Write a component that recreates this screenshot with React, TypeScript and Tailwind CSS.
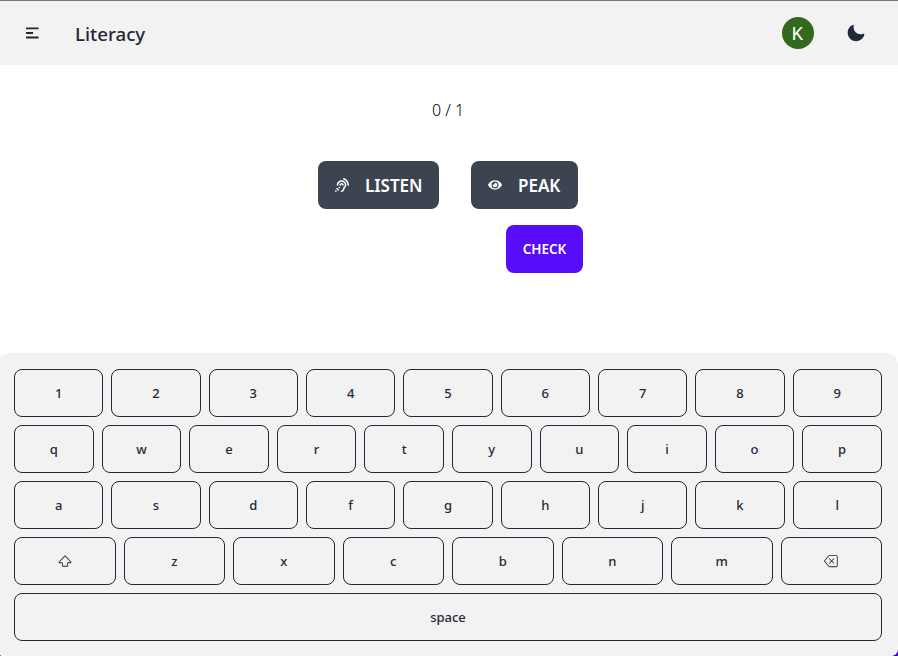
import React from "react";
import { FaAssistiveListeningSystems, FaEye } from "react-icons/fa";
import { BsShift, BsBackspace } from "react-icons/bs";

const rows: string[][] = [
  ["1", "2", "3", "4", "5", "6", "7", "8", "9"],
  ["q", "w", "e", "r", "t", "y", "u", "i", "o", "p"],
  ["a", "s", "d", "f", "g", "h", "j", "k", "l"],
  ["shift", "z", "x", "c", "b", "n", "m", "backspace"],
  ["space"],
];

function Key({ label }: { label: string }) {
  return (
    <button
      aria-label={label}
      className="flex h-12 min-w-0 flex-1 items-center justify-center rounded-lg border border-[#1f2937] text-[13px] font-medium leading-none"
    >
      {label === "shift" ? (
        <BsShift size={14} />
      ) : label === "backspace" ? (
        <BsBackspace size={14} />
      ) : (
        label
      )}
    </button>
  );
}

export default function App() {
  return (
    <div className="h-[656px] w-full overflow-hidden bg-linear-to-r from-[#444a5c] to-[#4506cb]">
      <div className="flex h-[656px] w-full flex-col overflow-hidden rounded-br-[7px] rounded-bl-[2px] bg-white font-['Noto_Sans','Open_Sans',sans-serif] text-[#1f2937]">
        <header className="flex h-[65px] shrink-0 items-center border-t border-[#77757d] bg-[#f2f2f2] pr-8 pl-[26px]">
          <button aria-label="Menu">
            <svg className="h-3 w-[13px]" viewBox="0 0 13 12" fill="none" stroke="currentColor" strokeWidth="1.8">
              <path d="M0 1.4h12.6M0 6h7M0 10.5h12.6" />
            </svg>
          </button>
          <h1 className="ml-9 flex-1 pt-0.5 text-[18.7px] font-medium">Literacy</h1>
          <div className="flex size-8 items-center justify-center rounded-full bg-[#33691e] pr-px font-[Roboto,sans-serif] text-[18px] text-white">
            K
          </div>
          <svg className="ml-8 size-5" viewBox="0 0 24 24" fill="currentColor">
            <path d="M21.64,13a1,1,0,0,0-1.05-.14,8.05,8.05,0,0,1-3.37.73A8.15,8.15,0,0,1,9.08,5.49a8.59,8.59,0,0,1,.25-2A1,1,0,0,0,8,2.36,10.14,10.14,0,1,0,22,14.05,1,1,0,0,0,21.64,13Z" />
          </svg>
        </header>

        <main className="flex h-72 shrink-0 flex-col pt-[33px]">
          <p className="pr-0.5 text-center text-[16px] leading-6 font-light text-black">0 / 1</p>
          <div className="mt-[39px] flex justify-center gap-8 pr-0.5">
            <button className="flex h-12 w-[121px] items-center rounded-lg bg-[#3d4451] pl-[17px] text-[17px] font-semibold text-white">
              <FaAssistiveListeningSystems size={14} />
              <span className="ml-4 pt-0.5">LISTEN</span>
            </button>
            <button className="flex h-12 w-[107px] items-center rounded-lg bg-[#3d4451] pl-[17px] text-[17px] font-semibold text-white">
              <FaEye size={14} />
              <span className="ml-4 pt-0.5">PEAK</span>
            </button>
          </div>
          <button className="mt-4 ml-[506px] h-12 w-[77px] rounded-lg bg-[#570df8] text-[13.5px] font-semibold text-white">
            CHECK
          </button>
        </main>

        <section className="-ml-0.5 flex h-[304px] shrink-0 flex-col gap-2 rounded-xl bg-[#f2f2f2] p-4">
          {rows.map((row) => (
            <div key={row[0]} className="flex gap-2">
              {row.map((k) => (
                <Key key={k} label={k} />
              ))}
            </div>
          ))}
        </section>
      </div>
    </div>
  );
}
